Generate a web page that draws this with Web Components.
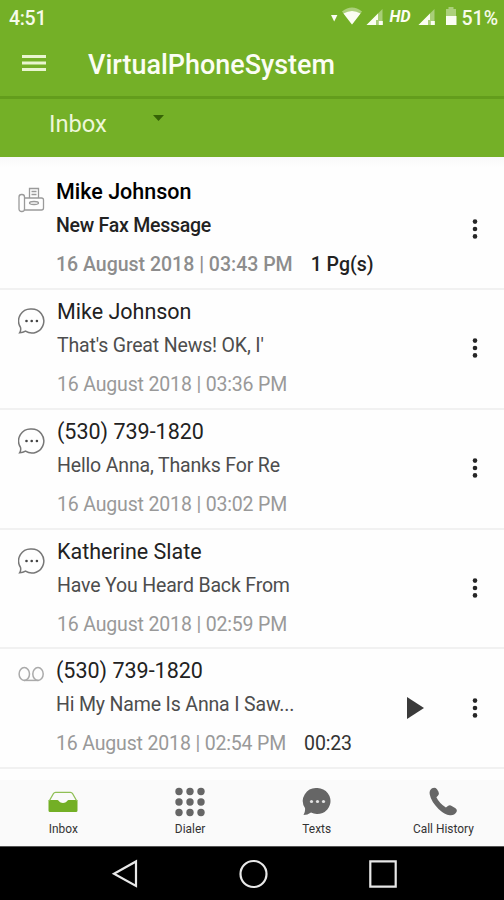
<!DOCTYPE html>
<html lang="en">

<head>
    <meta charset="UTF-8">
    <meta name="viewport" content="width=device-width, initial-scale=1.0">
    <title>VirtualPhoneSystem</title>
    <style>
        body {
            margin: 0;
            font-family: Roboto, "Liberation Sans", sans-serif;
            background: #fefefe;
        }
    </style>
</head>

<body>
    <template id="phone-screen">
        <style>
            :host {
                display: flex;
                flex-direction: column;
                width: 504px;
                height: 900px;
                overflow: hidden;
            }

            main {
                flex: 1;
                padding-top: 13px;
                background: linear-gradient(#f9f9f9, #fefefe 10px);
            }
        </style>
        <slot name="top"></slot>
        <main>
            <slot></slot>
        </main>
        <slot name="bottom"></slot>
    </template>

    <template id="status-bar">
        <style>
            :host {
                display: flex;
                align-items: center;
                height: 36px;
                padding: 0 6px 0 9px;
                background: #74b027;
                color: #f6fbe9;
                font-size: 19.5px;
                font-weight: 500;
            }

            svg {
                display: block;
                width: 132px;
                height: 36px;
            }

            .time {
                flex: 1;
                letter-spacing: -.3px;
            }

            .hd {
                font-size: 16.5px;
                font-style: italic;
                font-weight: 700;
            }
        </style>
        <span class="time"><slot name="time"></slot></span>
        <svg viewBox="328 0 132 36" fill="#fbfdf3">
            <path d="M330 15h6.400l-3.200 6.500z" />
            <path d="M341 11.500q10-8 20 0l-10 13z" opacity=".42" />
            <path d="M342.500 13.500q8.500-5 17 0l-8.500 11z" />
            <path d="M381.500 9v16h-16z" opacity=".4" />
            <path d="M377 13.500v6.500h-2v5h-9.500z" />
            <path d="M377.800 21h4v4h-4z" />
            <text class="hd" x="388.500" y="22" textLength="21" lengthAdjust="spacingAndGlyphs">HD</text>
            <path d="M433.500 9v16h-16z" opacity=".4" />
            <path d="M429 13.500v6.500h-2v5h-9.500z" />
            <path d="M429.800 21h4v4h-4z" />
            <path d="M445 9h2.500v-2h5v2h2.500v7h-10z" opacity=".42" />
            <path d="M445 16h10.500v9h-10.500z" />
        </svg>
        <slot name="battery"></slot>
    </template>

    <template id="app-header">
        <style>
            :host {
                display: block;
                background: #74b027;
                color: #fbfdf3;
            }

            .bar {
                display: flex;
                align-items: center;
                height: 60px;
                padding-left: 22px;
                border-bottom: 3px solid #639d1c;
            }

            .bar svg {
                margin: -7px 42px 0 0;
            }

            h1 {
                margin: -2px 0 0;
                font-size: 26.950px;
                font-weight: 500;
                line-height: 58px;
            }

            .folder {
                display: flex;
                align-items: center;
                height: 58px;
                padding-left: 49px;
                font-size: 23.700px;
                color: #eef7d9;
            }

            .folder span {
                width: 104px;
                margin-top: -9px;
            }

            .folder svg {
                margin-top: -20px;
            }
        </style>
        <div class="bar">
            <svg width="24" height="18" fill="#e9f5cf">
                <path d="M0 1h24v3H0zM0 7.500h24v3H0zM0 14h24v3H0z" />
            </svg>
            <h1><slot></slot></h1>
        </div>
        <div class="folder">
            <span><slot name="folder"></slot></span>
            <svg width="11" height="6" fill="#366306">
                <path d="M0 0h11L5.500 6z" />
            </svg>
        </div>
    </template>

    <template id="message-row">
        <style>
            :host {
                display: flex;
                box-sizing: border-box;
                height: 119.850px;
                padding: 5px 26px 0 18px;
                border-bottom: 2px solid #f1f1f1;
                color: #4d4d4d;
            }

            .icon {
                width: 39px;
                padding-top: 12px;
            }

            :host([unread]) .icon {
                padding-top: 11px;
            }

            .icon svg {
                display: block;
                width: 27px;
                height: 28px;
                fill: none;
                stroke: #777;
                stroke-width: 1.500;
            }

            .text {
                flex: 1;
                white-space: nowrap;
            }

            .name {
                font-size: 21.500px;
                line-height: 34px;
                color: #222;
            }

            .body {
                font-size: 19.500px;
                letter-spacing: -.16px;
                line-height: 33px;
            }

            .date {
                font-size: 19.500px;
                letter-spacing: -.16px;
                line-height: 45px;
                color: #999;
            }

            .extra {
                margin-left: 18px;
                color: #333;
            }

            .actions {
                display: flex;
                align-items: center;
                height: 107px;
            }

            .play {
                margin-right: 48px;
            }

            :host(:not([type="voicemail"])) .play {
                display: none;
            }

            :host([unread]) {
                font-weight: 500;
            }

            :host([unread]) .name {
                color: #000;
            }

            :host([unread]) .body {
                letter-spacing: -.25px;
                color: #222;
            }

            :host([unread]) .date {
                letter-spacing: 0;
                color: #8d8d8d;
            }

            :host([unread]) .extra {
                color: #222;
            }

            :host([unread]) .text,
            :host([type="voicemail"]) .text {
                margin-left: -1px;
            }
        </style>
        <div class="icon"></div>
        <div class="text">
            <div class="name"><slot name="name"></slot></div>
            <div class="body"><slot></slot></div>
            <div class="date"><slot name="date"></slot><span class="extra"><slot name="extra"></slot></span></div>
        </div>
        <div class="actions">
            <svg class="play" width="17" height="24" fill="#3a3a3a">
                <path d="M0 1l17 11L0 23z" />
            </svg>
            <svg width="6" height="20" fill="#262626">
                <circle cx="3" cy="2.600" r="2.300" />
                <circle cx="3" cy="10" r="2.300" />
                <circle cx="3" cy="17.400" r="2.300" />
            </svg>
        </div>
    </template>

    <template id="tab-bar">
        <style>
            :host {
                display: flex;
                height: 66px;
                background: #fafafa;
            }
        </style>
        <slot></slot>
    </template>

    <template id="tab-item">
        <style>
            :host {
                display: flex;
                flex: 0 0 126.700px;
                flex-direction: column;
                align-items: center;
                padding-top: 6px;
                color: #333;
                font-size: 11.900px;
                line-height: 14px;
            }

            svg {
                width: 32px;
                height: 32px;
                margin-bottom: 4px;
                fill: #666;
            }
        </style>
        <svg viewBox="0 0 32 32"></svg>
        <span><slot></slot></span>
    </template>

    <template id="nav-bar">
        <style>
            :host {
                display: flex;
                align-items: center;
                height: 54px;
                background: #000;
                border-top: 1px solid #555;
                box-sizing: border-box;
            }

            svg {
                display: block;
                margin-top: 1px;
            }
        </style>
        <svg width="504" height="30" fill="none" stroke="#e8e8e8" stroke-width="2.200">
            <path d="M136 2.500v24.500L114 14.800z" />
            <circle cx="253.500" cy="15" r="13" />
            <path d="M370.300 2.300h25.400v25.400h-25.400z" />
        </svg>
    </template>

    <script>
        const rowIcons = {
            fax: `<g stroke="#9a9a9a" stroke-width="1.300">
                    <rect x="1" y="8.500" width="5.500" height="17" rx="2.500" />
                    <path d="M6.500 12h17q2 0 2 2v8q0 2-2 2h-17M11.500 12V2.500h9V12M13.500 5.500h5M13.500 8.500h5" />
                    <ellipse cx="16" cy="17" rx="4.500" ry="1.500" />
                </g>`,
            text: `<path d="M13.700 2a12 12 0 1 1-6.200 22.200q-2.500 1.600-5.900 1.600 1.600-2.400.9-5.400A12 12 0 0 1 13.700 2z" />
                <g fill="#444" stroke="none">
                    <circle cx="8.500" cy="14" r="1.300" />
                    <circle cx="13.700" cy="14" r="1.300" />
                    <circle cx="18.900" cy="14" r="1.300" />
                </g>`,
            voicemail: `<g stroke="#aaa">
                    <ellipse cx="6.300" cy="8" rx="5.200" ry="6.400" />
                    <ellipse cx="20" cy="8" rx="5.200" ry="6.400" />
                    <path d="M6 14.400h14.500" />
                </g>`
        };

        const tabIcons = {
            inbox: `<path fill="#73af25" d="M1.500 14h9c1.500 0 1.500 3 5.500 3s4-3 5.500-3h9v10.500q0 1.500-1.500 1.500H3q-1.500 0-1.500-1.500z" />
                <path fill="none" stroke="#8fbf55" stroke-width="1.300" d="M2.200 15l4.300-7.500q.7-1.200 2-1.200h15q1.300 0 2 1.200l4.300 7.500" />`,
            dialer: [5.5, 16, 26.5].map(y => [5, 16, 27].map(x => `<circle cx="${x}" cy="${y}" r="3.700" />`).join('')).join(''),
            texts: `<path d="M16.500 2a13.300 13 0 1 1-6.500 24.500Q6.500 29 2.500 29q2-3 1.500-7A13.300 13 0 0 1 16.500 2z" />
                <g fill="#e4e4e4">
                    <circle cx="10.500" cy="15.500" r="1.600" />
                    <circle cx="16.500" cy="15.500" r="1.600" />
                    <circle cx="22.500" cy="15.500" r="1.600" />
                </g>`,
            calls: `<path d="M5 2.300Q8 .8 10 3.200l1.500 2.500q1.200 2.300-.6 4l-1.500 1.500q3 6.300 9.500 10.200l2-1.400q1.800-1.300 3.800-.1l3.800 2.300q2.200 1.700.8 4.100-2 3.500-6.500 3-5-.6-11.300-6.400-7.400-7.300-8.800-14.600Q2 4.300 5 2.300z" />`
        };

        class TemplateElement extends HTMLElement {
            constructor() {
                super();
                const shadow = this.attachShadow({ mode: 'open' });
                const template = document.getElementById(this.localName).content.cloneNode(true);
                shadow.appendChild(template);
            }
        }

        class PhoneScreen extends TemplateElement { }
        class StatusBar extends TemplateElement { }
        class AppHeader extends TemplateElement { }
        class TabBar extends TemplateElement { }
        class NavBar extends TemplateElement { }

        class MessageRow extends TemplateElement {
            connectedCallback() {
                this.shadowRoot.querySelector('.icon').innerHTML =
                    `<svg viewBox="0 0 27 28">${rowIcons[this.getAttribute('type')]}</svg>`;
            }
        }

        class TabItem extends TemplateElement {
            connectedCallback() {
                this.shadowRoot.querySelector('svg').innerHTML = tabIcons[this.getAttribute('icon')];
            }
        }

        customElements.define('phone-screen', PhoneScreen);
        customElements.define('status-bar', StatusBar);
        customElements.define('app-header', AppHeader);
        customElements.define('message-row', MessageRow);
        customElements.define('tab-bar', TabBar);
        customElements.define('tab-item', TabItem);
        customElements.define('nav-bar', NavBar);
    </script>

    <phone-screen>
        <status-bar slot="top">
            <span slot="time">4:51</span>
            <span slot="battery">51%</span>
        </status-bar>
        <app-header slot="top">VirtualPhoneSystem<span slot="folder">Inbox</span></app-header>

        <message-row type="fax" unread>
            <span slot="name">Mike Johnson</span>
            New Fax Message
            <span slot="date">16 August 2018 | 03:43 PM</span>
            <span slot="extra">1 Pg(s)</span>
        </message-row>
        <message-row type="text">
            <span slot="name">Mike Johnson</span>
            That's Great News! OK, I'
            <span slot="date">16 August 2018 | 03:36 PM</span>
        </message-row>
        <message-row type="text">
            <span slot="name">(530) 739-1820</span>
            Hello Anna, Thanks For Re
            <span slot="date">16 August 2018 | 03:02 PM</span>
        </message-row>
        <message-row type="text">
            <span slot="name">Katherine Slate</span>
            Have You Heard Back From
            <span slot="date">16 August 2018 | 02:59 PM</span>
        </message-row>
        <message-row type="voicemail">
            <span slot="name">(530) 739-1820</span>
            Hi My Name Is Anna I Saw...
            <span slot="date">16 August 2018 | 02:54 PM</span>
            <span slot="extra">00:23</span>
        </message-row>

        <tab-bar slot="bottom">
            <tab-item icon="inbox">Inbox</tab-item>
            <tab-item icon="dialer">Dialer</tab-item>
            <tab-item icon="texts">Texts</tab-item>
            <tab-item icon="calls">Call History</tab-item>
        </tab-bar>
        <nav-bar slot="bottom"></nav-bar>
    </phone-screen>
</body>

</html>
